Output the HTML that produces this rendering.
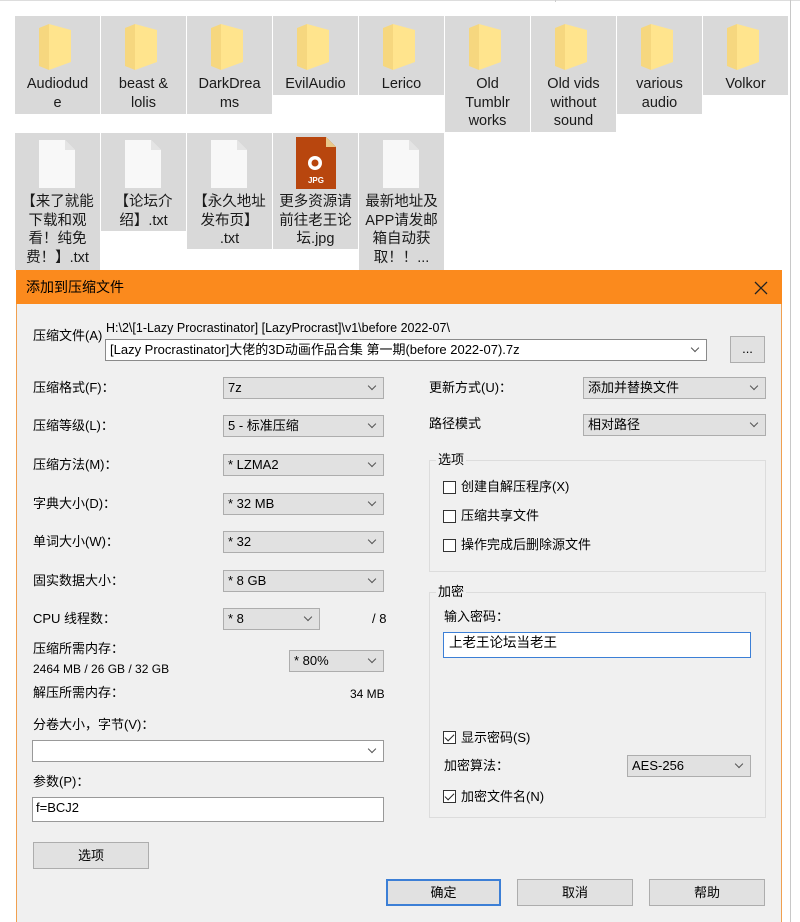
<!DOCTYPE html>
<html><head><meta charset="utf-8"><style>
*{margin:0;padding:0;box-sizing:border-box}
body{width:800px;height:922px;overflow:hidden;background:#fff;position:relative;font-family:"Liberation Sans","Noto Sans CJK SC",sans-serif;color:#000}
.a{position:absolute}
.tile{position:absolute;width:85px;background:#d9d9d9;text-align:center;font-size:14.5px;line-height:18.5px;color:#1a1a1a;padding-top:59px}
.fold{position:absolute;left:24px;top:8px;width:32px;height:46px}
.l{position:absolute;font-size:13px;white-space:nowrap;line-height:16px}
.cb{position:absolute;height:22px;background:#e1e1e1;border:1px solid #adadad;font-size:13px;line-height:20px;padding-left:4px;white-space:nowrap}
.cb.w{background:#fff}
.cb::after{content:"";position:absolute;right:8px;top:5px;width:5px;height:5px;border-right:1px solid #555;border-bottom:1px solid #555;transform:rotate(45deg)}
.btn{position:absolute;height:27px;background:#e1e1e1;border:1px solid #adadad;font-size:13px;line-height:25px;text-align:center}
.grp{position:absolute;border:1px solid #dcdcdc}
.chk{position:absolute;width:13px;height:13px;border:1px solid #333;background:#fff}
.chk.on::after{content:"";position:absolute;left:3px;top:0px;width:4px;height:8px;border-right:1.5px solid #222;border-bottom:1.5px solid #222;transform:rotate(45deg)}
.inp{position:absolute;background:#fff;border:1px solid #7a7a7a;font-size:13px;padding-left:5px;line-height:22px}
</style></head><body>
<div class="a" style="left:0;top:0;width:800px;height:1px;background:#ddd"></div>
<div class="a" style="left:790px;top:0;width:1px;height:922px;background:#c8c8c8"></div>
<div class="a" style="left:555px;top:0;width:1px;height:2px;background:#ccc"></div>

<!-- row1 -->
<div class="tile" style="left:15px;top:16px;height:98px">Audiodud<br>e<svg class="fold" viewBox="0 0 32 46"><path d="M0 4 L10 0 L10 46 L0 42 Z" fill="#f6d77f"/><path d="M10 0 L10 46 L32 38 L32 6 Z" fill="#ffe48d"/></svg></div>
<div class="tile" style="left:101px;top:16px;height:98px">beast &amp;<br>lolis<svg class="fold" viewBox="0 0 32 46"><path d="M0 4 L10 0 L10 46 L0 42 Z" fill="#f6d77f"/><path d="M10 0 L10 46 L32 38 L32 6 Z" fill="#ffe48d"/></svg></div>
<div class="tile" style="left:187px;top:16px;height:98px">DarkDrea<br>ms<svg class="fold" viewBox="0 0 32 46"><path d="M0 4 L10 0 L10 46 L0 42 Z" fill="#f6d77f"/><path d="M10 0 L10 46 L32 38 L32 6 Z" fill="#ffe48d"/></svg></div>
<div class="tile" style="left:273px;top:16px;height:79px">EvilAudio<svg class="fold" viewBox="0 0 32 46"><path d="M0 4 L10 0 L10 46 L0 42 Z" fill="#f6d77f"/><path d="M10 0 L10 46 L32 38 L32 6 Z" fill="#ffe48d"/></svg></div>
<div class="tile" style="left:359px;top:16px;height:79px">Lerico<svg class="fold" viewBox="0 0 32 46"><path d="M0 4 L10 0 L10 46 L0 42 Z" fill="#f6d77f"/><path d="M10 0 L10 46 L32 38 L32 6 Z" fill="#ffe48d"/></svg></div>
<div class="tile" style="left:445px;top:16px;height:116px">Old<br>Tumblr<br>works<svg class="fold" viewBox="0 0 32 46"><path d="M0 4 L10 0 L10 46 L0 42 Z" fill="#f6d77f"/><path d="M10 0 L10 46 L32 38 L32 6 Z" fill="#ffe48d"/></svg></div>
<div class="tile" style="left:531px;top:16px;height:116px">Old vids<br>without<br>sound<svg class="fold" viewBox="0 0 32 46"><path d="M0 4 L10 0 L10 46 L0 42 Z" fill="#f6d77f"/><path d="M10 0 L10 46 L32 38 L32 6 Z" fill="#ffe48d"/></svg></div>
<div class="tile" style="left:617px;top:16px;height:98px">various<br>audio<svg class="fold" viewBox="0 0 32 46"><path d="M0 4 L10 0 L10 46 L0 42 Z" fill="#f6d77f"/><path d="M10 0 L10 46 L32 38 L32 6 Z" fill="#ffe48d"/></svg></div>
<div class="tile" style="left:703px;top:16px;height:79px">Volkor<svg class="fold" viewBox="0 0 32 46"><path d="M0 4 L10 0 L10 46 L0 42 Z" fill="#f6d77f"/><path d="M10 0 L10 46 L32 38 L32 6 Z" fill="#ffe48d"/></svg></div>

<!-- row2 -->
<div class="tile" style="left:15px;top:133px;height:137px;padding-top:60px">【来了就能<br>下载和观<br>看！纯免<br>费！】.txt<svg class="a" style="left:24px;top:7px" width="36" height="48"><path d="M0 0H26L36 10V48H0Z" fill="#f8f8f8"/><path d="M26 0V10H36" fill="#e4e4e4"/></svg></div>
<div class="tile" style="left:101px;top:133px;height:98px;padding-top:60px">【论坛介<br>绍】.txt<svg class="a" style="left:24px;top:7px" width="36" height="48"><path d="M0 0H26L36 10V48H0Z" fill="#f8f8f8"/><path d="M26 0V10H36" fill="#e4e4e4"/></svg></div>
<div class="tile" style="left:187px;top:133px;height:116px;padding-top:60px">【永久地址<br>发布页】<br>.txt<svg class="a" style="left:24px;top:7px" width="36" height="48"><path d="M0 0H26L36 10V48H0Z" fill="#f8f8f8"/><path d="M26 0V10H36" fill="#e4e4e4"/></svg></div>
<div class="tile" style="left:273px;top:133px;height:116px;padding-top:60px">更多资源请<br>前往老王论<br>坛.jpg<svg class="a" style="left:23px;top:4px" width="40" height="52"><path d="M0 0H30L40 10V52H0Z" fill="#b8460e"/><path d="M30 0V10H40Z" fill="#e8c88a"/><circle cx="19" cy="26" r="7" fill="#fff"/><circle cx="19" cy="26" r="3.5" fill="#b8460e"/><text x="20" y="46" font-size="8" fill="#fff" text-anchor="middle" font-family="Liberation Sans" font-weight="bold">JPG</text></svg></div>
<div class="tile" style="left:359px;top:133px;height:137px;padding-top:60px">最新地址及<br>APP请发邮<br>箱自动获<br>取！！...<svg class="a" style="left:24px;top:7px" width="36" height="48"><path d="M0 0H26L36 10V48H0Z" fill="#f8f8f8"/><path d="M26 0V10H36" fill="#e4e4e4"/></svg></div>

<!-- dialog -->
<div class="a" style="left:16px;top:270px;width:766px;height:652px;background:#f0f0f0;border:1px solid #f0a050;border-bottom:none"></div>
<div class="a" style="left:16px;top:270px;width:766px;height:34px;background:#fb8a1d"></div>
<div class="l" style="left:26px;top:279px;font-size:14px">添加到压缩文件</div>
<svg class="a" style="left:754px;top:281px" width="14" height="14"><path d="M1 1L13 13M13 1L1 13" stroke="#222" stroke-width="1.3"/></svg>

<div class="l" style="left:33px;top:328px">压缩文件(A)</div>
<div class="l" style="left:106px;top:320px;font-size:12.5px">H:\2\[1-Lazy Procrastinator] [LazyProcrast]\v1\before 2022-07\</div>
<div class="cb w" style="left:105px;top:339px;width:602px;border-color:#8a8a8a">[Lazy Procrastinator]大佬的3D动画作品合集 第一期(before 2022-07).7z</div>
<div class="btn" style="left:730px;top:336px;width:35px;line-height:24px">...</div>

<div class="l" style="left:33px;top:380px">压缩格式(F)：</div><div class="cb" style="left:223px;top:377px;width:161px">7z</div>
<div class="l" style="left:33px;top:418px">压缩等级(L)：</div><div class="cb" style="left:223px;top:415px;width:161px">5 - 标准压缩</div>
<div class="l" style="left:33px;top:457px">压缩方法(M)：</div><div class="cb" style="left:223px;top:454px;width:161px">* LZMA2</div>
<div class="l" style="left:33px;top:496px">字典大小(D)：</div><div class="cb" style="left:223px;top:493px;width:161px">* 32 MB</div>
<div class="l" style="left:33px;top:534px">单词大小(W)：</div><div class="cb" style="left:223px;top:531px;width:161px">* 32</div>
<div class="l" style="left:33px;top:573px">固实数据大小：</div><div class="cb" style="left:223px;top:570px;width:161px">* 8 GB</div>
<div class="l" style="left:33px;top:611px">CPU 线程数：</div><div class="cb" style="left:223px;top:608px;width:97px">* 8</div><div class="l" style="left:372px;top:611px">/ 8</div>
<div class="l" style="left:33px;top:641px">压缩所需内存：</div><div class="l" style="left:33px;top:661px;font-size:12px">2464 MB / 26 GB / 32 GB</div>
<div class="cb" style="left:289px;top:650px;width:95px">* 80%</div>
<div class="l" style="left:33px;top:685px">解压所需内存：</div><div class="l" style="left:350px;top:686px;font-size:12px">34 MB</div>
<div class="l" style="left:33px;top:717px">分卷大小，字节(V)：</div>
<div class="cb w" style="left:32px;top:740px;width:352px;border-color:#999"></div>
<div class="l" style="left:33px;top:774px">参数(P)：</div>
<div class="inp" style="left:32px;top:797px;width:352px;height:25px;border-color:#999;line-height:20px;padding-left:3px">f=BCJ2</div>
<div class="btn" style="left:33px;top:842px;width:116px">选项</div>

<div class="l" style="left:429px;top:380px">更新方式(U)：</div><div class="cb" style="left:583px;top:377px;width:183px">添加并替换文件</div>
<div class="l" style="left:429px;top:416px">路径模式</div><div class="cb" style="left:583px;top:414px;width:183px">相对路径</div>

<div class="grp" style="left:429px;top:460px;width:337px;height:112px"></div>
<div class="l" style="left:436px;top:452px;background:#f0f0f0;padding:0 2px">选项</div>
<div class="chk" style="left:443px;top:481px"></div><div class="l" style="left:461px;top:479px">创建自解压程序(X)</div>
<div class="chk" style="left:443px;top:510px"></div><div class="l" style="left:461px;top:508px">压缩共享文件</div>
<div class="chk" style="left:443px;top:539px"></div><div class="l" style="left:461px;top:537px">操作完成后删除源文件</div>

<div class="grp" style="left:429px;top:592px;width:337px;height:226px"></div>
<div class="l" style="left:436px;top:584px;background:#f0f0f0;padding:0 2px">加密</div>
<div class="l" style="left:444px;top:609px">输入密码：</div>
<div class="inp" style="left:443px;top:632px;width:308px;height:26px;border-color:#3c7fd6;line-height:20px;font-size:13.5px">上老王论坛当老王</div>
<div class="chk on" style="left:443px;top:731px"></div><div class="l" style="left:461px;top:730px">显示密码(S)</div>
<div class="l" style="left:444px;top:758px">加密算法：</div><div class="cb" style="left:627px;top:755px;width:124px">AES-256</div>
<div class="chk on" style="left:443px;top:790px"></div><div class="l" style="left:461px;top:789px">加密文件名(N)</div>

<div class="btn" style="left:386px;top:879px;width:115px;border:2px solid #3c7fd6;line-height:23px">确定</div>
<div class="btn" style="left:517px;top:879px;width:116px">取消</div>
<div class="btn" style="left:649px;top:879px;width:116px">帮助</div>
</body></html>
